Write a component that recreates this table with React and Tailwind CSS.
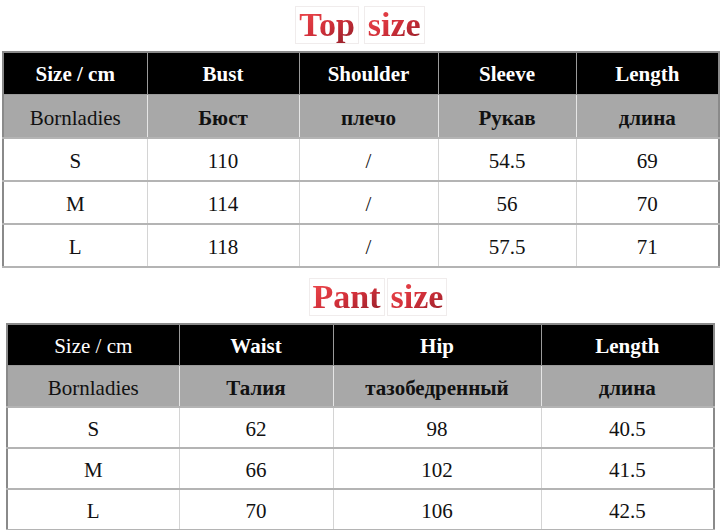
const TOP = {
  cols: ["w-[144px]", "w-[152px]", "w-[139px]", "w-[138px]", "w-[143px]"],
  head: ["Size / cm", "Bust", "Shoulder", "Sleeve", "Length"],
  headBold: true,
  sub: ["Bornladies", "Бюст", "плечо", "Рукав", "длина"],
  rows: [
    ["S", "110", "/", "54.5", "69"],
    ["M", "114", "/", "56", "70"],
    ["L", "118", "/", "57.5", "71"],
  ],
};

const PANT = {
  cols: ["w-[172px]", "w-[154px]", "w-[208px]", "w-[173px]"],
  head: ["Size / cm", "Waist", "Hip", "Length"],
  headBold: false,
  sub: ["Bornladies", "Талия", "тазобедренный", "длина"],
  rows: [
    ["S", "62", "98", "40.5"],
    ["M", "66", "102", "41.5"],
    ["L", "70", "106", "42.5"],
  ],
};

function Title({ words, className }) {
  return (
    <div className={`flex justify-center ${className}`}>
      {words.map((w) => (
        <span key={w} className="border border-[#f0ecec] px-[3px] leading-[36px] text-[34px] font-bold bg-linear-to-br from-[#f04a4e] via-[#d3303a] to-[#8e1e28] bg-clip-text text-transparent">
          {w}
        </span>
      ))}
    </div>
  );
}

function SizeTable({ t, headH, subH, rowH }) {
  return (
    <table className="border-collapse table-fixed border-2 border-[#8a8a8a] text-[21px] leading-none text-[#111] font-['Liberation_Serif','Times_New_Roman',serif]">
      <colgroup>
        {t.cols.map((c, i) => <col key={i} className={c} />)}
      </colgroup>
      <tbody>
        <tr className={`bg-black text-white ${headH}`}>
          {t.head.map((h, i) => (
            <td key={i} className={`border border-[#9a9a9a] text-center p-0 pt-[3px] ${i === 0 && !t.headBold ? "font-normal" : "font-bold"}`}>{h}</td>
          ))}
        </tr>
        <tr className={`bg-[#a8a8a8] ${subH}`}>
          {t.sub.map((h, i) => (
            <td key={i} className={`border border-[#e6e6e6] text-center p-0 pt-[5px] ${i === 0 ? "font-normal" : "font-bold"}`}>{h}</td>
          ))}
        </tr>
        {t.rows.map((r, ri) => (
          <tr key={ri} className={`bg-white ${rowH}`}>
            {r.map((v, i) => (
              <td key={i} className="border-x border-x-[#d4d4d4] border-y-2 border-y-[#b4b4b4] text-center p-0 pt-[4px]">{v}</td>
            ))}
          </tr>
        ))}
      </tbody>
    </table>
  );
}

export default function App() {
  return (
    <div className="w-[720px] h-[530px] bg-white overflow-hidden font-['Liberation_Serif','Times_New_Roman',serif]">
      <div className="pt-[6px] pb-[7px]">
        <Title words={["Top", "size"]} className="gap-[5px]" />
      </div>
      <div className="pl-[2px]">
        <SizeTable t={TOP} headH="h-[42px]" subH="h-[44px]" rowH="h-[43px]" />
      </div>
      <div className="pt-[10px] pb-[7px]">
        <Title words={["Pant", "size"]} className="gap-[2px] pl-[36px]" />
      </div>
      <div className="pl-[6px]">
        <SizeTable t={PANT} headH="h-[41px]" subH="h-[42px]" rowH="h-[41px]" />
      </div>
    </div>
  );
}
